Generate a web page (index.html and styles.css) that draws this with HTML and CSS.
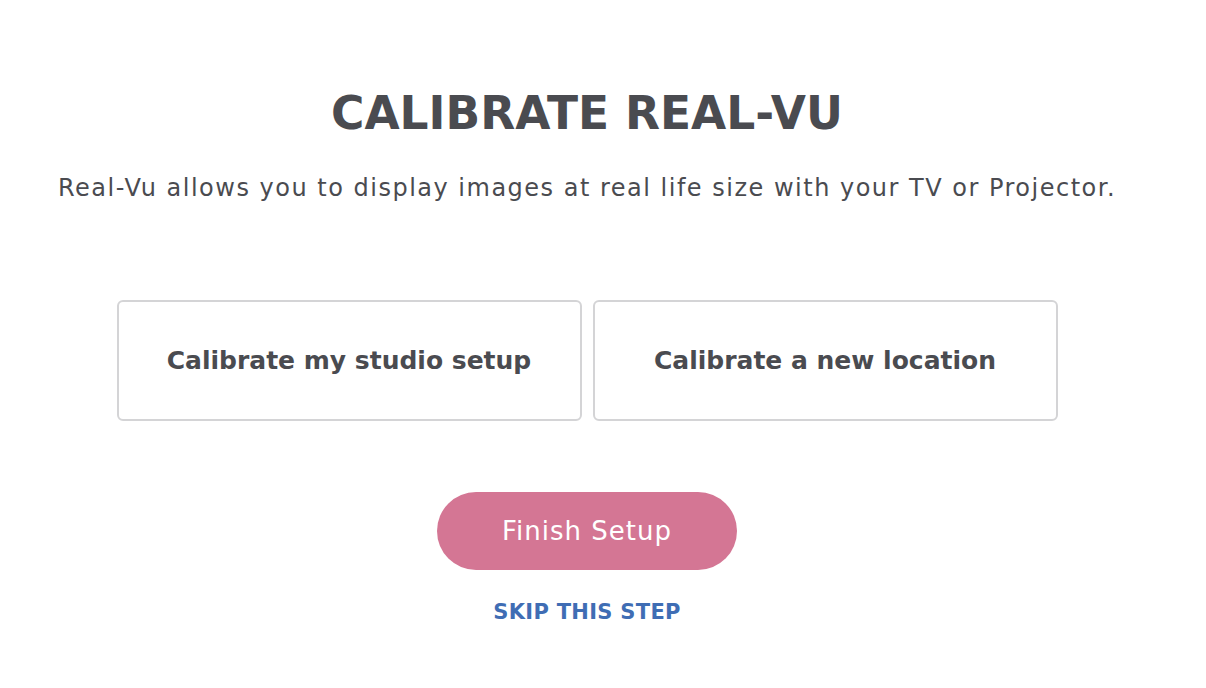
FILE: index.html
```html
<!DOCTYPE html>
<html lang="en">
<head>
    <meta charset="UTF-8">
    <meta name="viewport" content="width=device-width, initial-scale=1.0">
    <title>Calibrate Real-Vu</title>
    <link rel="stylesheet" href="styles.css">
</head>
<body>
    <div class="setup">
        <h1>Calibrate Real-Vu</h1>
        <p class="intro">Real-Vu allows you to display images at real life size with your TV or Projector.</p>
        <div class="options">
            <button class="option">Calibrate my studio setup</button>
            <button class="option">Calibrate a new location</button>
        </div>
        <button class="finish">Finish Setup</button>
        <a class="skip" href="#">Skip this step</a>
    </div>
</body>
</html>
```

FILE: styles.css
```css
:root {
    --text-color: #4a4b50;
    --border-color: #d4d4d6;
    --pink: #d47694;
    --blue: #3f6db4;
}

body {
    margin: 0;
    font-family: 'DejaVu Sans', sans-serif;
    color: var(--text-color);
    background: #fff;
}

.setup {
    width: 1174px;
    padding-top: 86px;
    display: flex;
    flex-direction: column;
    align-items: center;
    text-align: center;
}

h1 {
    margin: 0;
    font-size: 45.5px;
    font-weight: bold;
    text-transform: uppercase;
    line-height: 56px;
}

.intro {
    margin: 31px 0 0;
    font-size: 24px;
    letter-spacing: 1.5px;
    line-height: 30px;
}

.options {
    display: flex;
    gap: 11px;
    margin-top: 97px;
}

.option {
    width: 465px;
    height: 121px;
    background: #fff;
    border: 2px solid var(--border-color);
    border-radius: 6px;
    font-family: inherit;
    font-size: 25px;
    font-weight: bold;
    color: var(--text-color);
    cursor: pointer;
}

.finish {
    margin-top: 71px;
    width: 300px;
    height: 78px;
    border: none;
    border-radius: 39px;
    background: var(--pink);
    color: #fff;
    font-family: inherit;
    font-size: 26px;
    letter-spacing: 1px;
    cursor: pointer;
}

.skip {
    margin-top: 30px;
    color: var(--blue);
    font-size: 21px;
    letter-spacing: 0.3px;
    font-weight: bold;
    text-transform: uppercase;
    text-decoration: none;
}
```
